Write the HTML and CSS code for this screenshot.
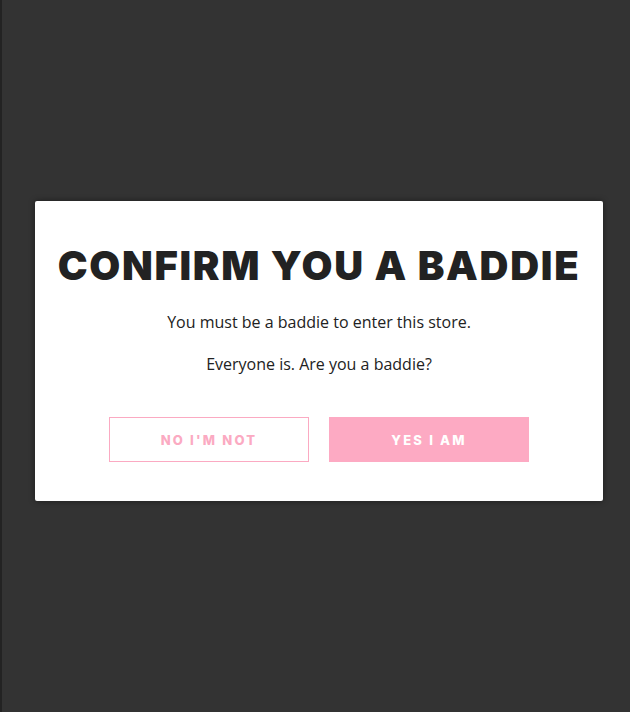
FILE: index.html
```html
<!DOCTYPE html>
<html lang="en">
<head>
    <meta charset="UTF-8" />
    <meta name="viewport" content="width=device-width, initial-scale=1" />
    <title>Age Gate</title>
    <link rel="stylesheet" href="styles.css">
</head>
<body>
    <div class="overlay">
        <div class="gate-modal">
            <h1 class="gate-title">Confirm you a baddie</h1>
            <p class="gate-text">You must be a baddie to enter this store.</p>
            <p class="gate-text">Everyone is. Are you a baddie?</p>
            <div class="gate-actions">
                <button class="gate-button gate-button-outline">No I'm not</button>
                <button class="gate-button gate-button-solid">Yes I am</button>
            </div>
        </div>
    </div>
</body>
</html>
```

FILE: styles.css
```css
html, body {
    margin: 0;
    padding: 0;
    height: 100%;
    overflow: hidden;
}
body {
    background: #333333;
    border-left: 2px solid #232323;
    font-family: 'Open Sans', 'Noto Sans', sans-serif;
    color: #222222;
}
.overlay {
    height: 100%;
    display: flex;
    align-items: center;
    justify-content: center;
    padding: 0 26px 0 32px;
    box-sizing: border-box;
}
.gate-modal {
    width: 568px;
    height: 300px;
    background: #ffffff;
    border-radius: 2px;
    box-shadow: 0 0 6px rgba(0, 0, 0, 0.45);
    box-sizing: border-box;
    padding: 39px 20px 0;
    text-align: center;
    margin-top: -10px;
}
.gate-title {
    margin: 0;
    font-family: Inter, 'Liberation Sans', sans-serif;
    font-weight: 900;
    font-size: 40px;
    line-height: 52px;
    letter-spacing: 1.7px;
    text-transform: uppercase;
    color: #222222;
}
.gate-text {
    margin: 0;
    font-size: 16px;
    line-height: 22px;
}
.gate-title + .gate-text {
    margin-top: 19px;
}
.gate-text + .gate-text {
    margin-top: 20px;
}
.gate-actions {
    display: flex;
    justify-content: center;
    gap: 20px;
    margin-top: 42px;
}
.gate-button {
    width: 200px;
    height: 45px;
    font-family: Inter, 'Liberation Sans', sans-serif;
    font-weight: 800;
    font-size: 13px;
    letter-spacing: 2.2px;
    text-transform: uppercase;
    border-radius: 0;
    cursor: pointer;
}
.gate-button-outline {
    background: #ffffff;
    border: 1px solid #fbaac2;
    color: #fbaac2;
}
.gate-button-solid {
    background: #fdaac3;
    border: 1px solid #fdaac3;
    color: #ffffff;
}
```
